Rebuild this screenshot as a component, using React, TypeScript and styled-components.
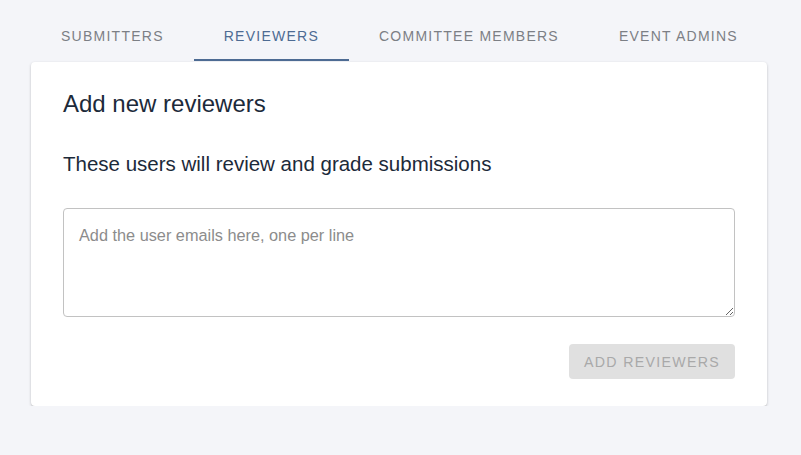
import React from "react";
import styled, { createGlobalStyle } from "styled-components";

const Global = createGlobalStyle`
  html, body { margin: 0; padding: 0; background: #f4f5f9; }
  body { font-family: "Liberation Sans", Arial, sans-serif; }
`;

const Page = styled.div`
  padding: 13px 34px 0 31px;
  width: 736px;
`;

const TabBar = styled.div`
  display: flex;
  height: 48px;
`;

const Tab = styled.div<{ $active?: boolean }>`
  flex: 0 0 auto;
  white-space: nowrap;
  display: flex;
  align-items: center;
  justify-content: center;
  padding: 0 30px;
  font-size: 14px;
  letter-spacing: 1.25px;
  text-transform: uppercase;
  color: ${(p) => (p.$active ? "#4d6b93" : "#7c7f85")};
  border-bottom: 2px solid ${(p) => (p.$active ? "#4d6b93" : "transparent")};
  box-sizing: border-box;
`;

const Card = styled.div`
  margin-top: 1px;
  background: #fff;
  border-radius: 4px;
  box-shadow: 0 1px 3px rgba(0, 0, 0, 0.2), 0 1px 1px rgba(0, 0, 0, 0.08);
  padding: 26px 32px 27px;
  display: flex;
  flex-direction: column;
`;

const Title = styled.h2`
  margin: 0;
  font-size: 24px;
  font-weight: 400;
  line-height: 32px;
  color: #1c2a3a;
`;

const Subtitle = styled.p`
  margin: 30px 0 0;
  font-size: 20.5px;
  line-height: 28px;
  color: #1c2a3a;
`;

const TextArea = styled.textarea`
  margin-top: 30px;
  box-sizing: border-box;
  height: 109px;
  width: 100%;
  border: 1px solid #c2c2c2;
  border-radius: 4px;
  padding: 17px 15px;
  font-family: "Liberation Sans", Arial, sans-serif;
  font-size: 16.3px;
  color: #333;
  resize: vertical;
  outline: none;
  &::placeholder { color: #8c8c8c; }
`;

const Actions = styled.div`
  display: flex;
  justify-content: flex-end;
  margin-top: 27px;
`;

const Button = styled.button`
  height: 35px;
  width: 166px;
  border: none;
  border-radius: 4px;
  background: #e0e0e0;
  color: #a9a9a9;
  font-family: "Liberation Sans", Arial, sans-serif;
  font-size: 14.2px;
  letter-spacing: 1.3px;
  text-transform: uppercase;
  cursor: default;
`;

export default function App() {
  const tabs = ["Submitters", "Reviewers", "Committee Members", "Event Admins"];
  return (
    <>
      <Global />
      <Page>
        <TabBar>
          {tabs.map((t) => (
            <Tab key={t} $active={t === "Reviewers"}>
              {t}
            </Tab>
          ))}
        </TabBar>
        <Card>
          <Title>Add new reviewers</Title>
          <Subtitle>These users will review and grade submissions</Subtitle>
          <TextArea placeholder="Add the user emails here, one per line" />
          <Actions>
            <Button disabled>Add reviewers</Button>
          </Actions>
        </Card>
      </Page>
    </>
  );
}
